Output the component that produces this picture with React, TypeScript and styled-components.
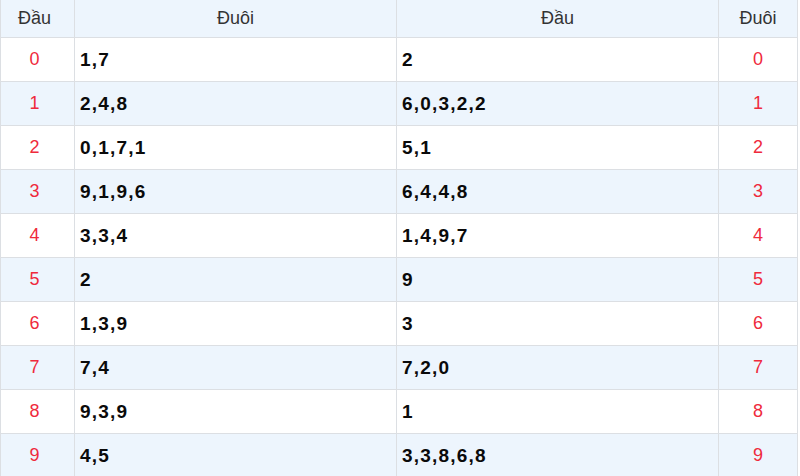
import React from "react";
import styled, { createGlobalStyle } from "styled-components";

const Global = createGlobalStyle`
  html, body { margin: 0; padding: 0; background: #fff; }
  body { font-family: "Liberation Sans", Arial, sans-serif; }
`;

const Grid = styled.div`
  display: grid;
  grid-template-columns: 74px 322px 322px 79px;
  width: 798px;
  border-left: 1px solid #dcdfe3;
  box-sizing: border-box;
`;

const Cell = styled.div<{ $alt?: boolean; $head?: boolean; $center?: boolean }>`
  box-sizing: border-box;
  height: ${(p) => (p.$head ? "38px" : "44px")};
  border-right: 1px solid #dcdfe3;
  border-bottom: 1px solid #dcdfe3;
  background: ${(p) => (p.$head || p.$alt ? "#edf5fd" : "#ffffff")};
  display: flex;
  align-items: center;
  justify-content: ${(p) => (p.$center ? "center" : "flex-start")};
  padding: 0 5px;
`;

const FirstCell = styled(Cell)`
  padding: 0 8px 0 2px;
`;

const HeadText = styled.span`
  font-size: 18px;
  color: #333;
`;

const KeyText = styled.span`
  font-size: 18px;
  color: #ef2a3c;
`;

const ValText = styled.span`
  font-size: 19px;
  font-weight: bold;
  color: #0a0a0a;
  letter-spacing: 1.2px;
`;

const left = ["1,7", "2,4,8", "0,1,7,1", "9,1,9,6", "3,3,4", "2", "1,3,9", "7,4", "9,3,9", "4,5"];
const right = ["2", "6,0,3,2,2", "5,1", "6,4,4,8", "1,4,9,7", "9", "3", "7,2,0", "1", "3,3,8,6,8"];

export default function App() {
  return (
    <>
      <Global />
      <Grid>
        <FirstCell $head $center><HeadText>Đầu</HeadText></FirstCell>
        <Cell $head $center><HeadText>Đuôi</HeadText></Cell>
        <Cell $head $center><HeadText>Đầu</HeadText></Cell>
        <Cell $head $center><HeadText>Đuôi</HeadText></Cell>
        {left.map((l, i) => (
          <React.Fragment key={i}>
            <FirstCell $alt={i % 2 === 1} $center><KeyText>{i}</KeyText></FirstCell>
            <Cell $alt={i % 2 === 1}><ValText>{l}</ValText></Cell>
            <Cell $alt={i % 2 === 1}><ValText>{right[i]}</ValText></Cell>
            <Cell $alt={i % 2 === 1} $center><KeyText>{i}</KeyText></Cell>
          </React.Fragment>
        ))}
      </Grid>
    </>
  );
}
